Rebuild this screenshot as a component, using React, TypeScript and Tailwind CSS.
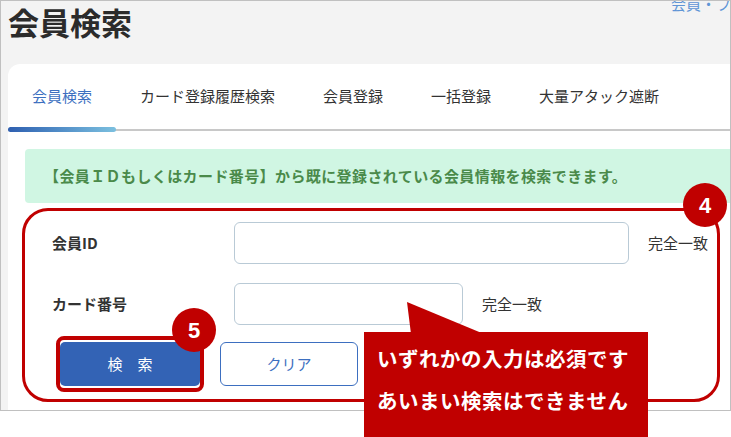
const tabs = ["会員検索", "カード登録履歴検索", "会員登録", "一括登録", "大量アタック遮断"];

export default function App() {
  return (
    <div className="relative w-[731px] h-[437px] bg-white font-['Noto_Sans_CJK_JP','Noto_Sans',sans-serif] text-[#333]">
      {/* screenshot frame */}
      <div className="flex flex-col w-[731px] h-[411px] border border-[#c0c0c0] bg-[#f3f3f3] overflow-hidden">
        <div className="flex h-[63px] shrink-0">
          <h1 className="mt-[6px] pl-[7px] text-[31px] leading-[30px] font-bold text-[#2b2b2b]">会員検索</h1>
          <div className="flex-1" />
          <span className="-mt-[7px] w-[59px] overflow-hidden whitespace-nowrap text-[15px] leading-[20px] text-[#5f95d6]">
            会員・ファン管理
          </span>
        </div>

        {/* card */}
        <div className="ml-[7px] flex-1 rounded-tl-[12px] bg-white">
          <div className="flex h-[67px] border-b-2 border-[#c8c8c8]">
            {tabs.map((t, i) => (
              <div
                key={t}
                className={`relative flex items-center px-6 text-[15px] whitespace-nowrap ${
                  i === 0 ? "text-[#3c6fbf]" : "text-[#333]"
                }`}
              >
                {t}
                {i === 0 && (
                  <span className="absolute left-0 right-0 -bottom-[3px] h-[5px] rounded-full bg-gradient-to-r from-[#2f5fb0] to-[#7cc0df]" />
                )}
              </div>
            ))}
          </div>

          <div className="mt-[18px] ml-[17px] flex items-center w-[720px] h-[54px] rounded-[4px] bg-[#d0f6e3] pl-[19px] text-[15px] font-bold tracking-[0.4px] text-[#4a8a4a] whitespace-nowrap">
            【会員ＩＤもしくはカード番号】から既に登録されている会員情報を検索できます。
          </div>

          <div className="flex flex-col pl-[44px] pt-[19px]">
            <div className="flex items-center h-[42px]">
              <span className="w-[182px] text-[15px] font-bold">会員ID</span>
              <div className="w-[395px] h-[42px] rounded-[6px] border border-[#b9cad6] bg-white" />
              <span className="ml-[19px] text-[15px]">完全一致</span>
            </div>
            <div className="mt-[19px] flex items-center h-[42px]">
              <span className="w-[182px] text-[15px] font-bold">カード番号</span>
              <div className="w-[229px] h-[42px] rounded-[6px] border border-[#b9cad6] bg-white" />
              <span className="ml-[19px] text-[15px]">完全一致</span>
            </div>
            <div className="mt-[17px] flex items-center pl-[8px]">
              <button className="w-[140px] h-[44px] rounded-[5px] bg-[#3363b5] text-[15px] text-white">検　索</button>
              <button className="ml-[20px] w-[138px] h-[44px] rounded-[6px] border-[1.5px] border-[#3d6fc0] bg-white text-[15px] text-[#3d6fc0]">
                クリア
              </button>
            </div>
          </div>
        </div>
      </div>

      {/* annotations */}
      <div className="absolute left-[22px] top-[208px] w-[698px] h-[194px] rounded-[26px] border-[3px] border-[#c00000]" />
      <div className="absolute left-[56px] top-[336px] w-[148px] h-[56px] rounded-[8px] border-4 border-[#c00000]" />

      <div className="absolute left-[683px] top-[183px] flex items-center justify-center w-[44px] h-[44px] rounded-full bg-[#c00000] text-[22px] font-bold text-white font-['Liberation_Sans',sans-serif]">
        4
      </div>
      <div className="absolute left-[172px] top-[308px] flex items-center justify-center w-[44px] h-[44px] rounded-full bg-[#c00000] text-[22px] font-bold text-white font-['Liberation_Sans',sans-serif]">
        5
      </div>

      <svg className="absolute left-0 top-0" width="731" height="437">
        <polygon points="407,302 411,334 484,334" fill="#c00000" />
      </svg>
      <div className="absolute left-[364px] top-[332px] w-[284px] h-[105px] bg-[#c00000] pl-[13px] pt-[5px] text-[20.5px] leading-[42px] font-bold tracking-[0.5px] text-white whitespace-nowrap">
        <div>いずれかの入力は必須です</div>
        <div>あいまい検索はできません</div>
      </div>
    </div>
  );
}
